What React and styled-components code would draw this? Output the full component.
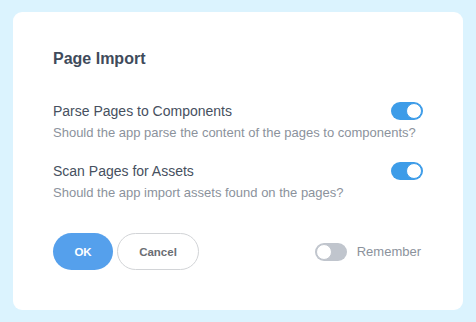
import React, { useState } from "react";
import styled, { createGlobalStyle } from "styled-components";

const GlobalStyle = createGlobalStyle`
  html, body {
    margin: 0;
    background: #dbf3fe;
  }
  body {
    padding: 12px 13px;
    font-family: "Liberation Sans", Arial, sans-serif;
  }
`;

const Card = styled.div`
  width: 450px;
  height: 298px;
  box-sizing: border-box;
  background: #ffffff;
  border-radius: 9px;
  padding: 37px 40px 0 40px;
  display: flex;
  flex-direction: column;
`;

const Title = styled.h2`
  margin: 0;
  font-size: 16px;
  font-weight: bold;
  color: #3f4b5b;
  line-height: 20px;
`;

const Options = styled.div`
  margin-top: 33px;
  display: flex;
  flex-direction: column;
  gap: 21px;
`;

const Option = styled.div`
  display: grid;
  grid-template-columns: 1fr auto;
  row-gap: 5px;
  align-items: center;
`;

const Label = styled.div`
  font-size: 14px;
  color: #465060;
  line-height: 18px;
`;

const Description = styled.div`
  grid-column: 1 / span 2;
  font-size: 13px;
  color: #8b929c;
  line-height: 16px;
`;

const Track = styled.button`
  position: relative;
  width: 32px;
  height: 18px;
  padding: 0;
  border: none;
  border-radius: 9px;
  cursor: pointer;
  background: ${(p) => (p.$on ? "#3d9ce8" : "#c0c5cd")};
`;

const Knob = styled.span`
  position: absolute;
  top: 1px;
  left: ${(p) => (p.$on ? "15px" : "1px")};
  width: 16px;
  height: 16px;
  box-sizing: border-box;
  border-radius: 50%;
  background: #ffffff;
  border: 1px solid ${(p) => (p.$on ? "#3d9ce8" : "#c0c5cd")};
`;

const Toggle = ({ on, onChange }) => (
  <Track $on={on} onClick={() => onChange(!on)}>
    <Knob $on={on} />
  </Track>
);

const Footer = styled.div`
  margin-top: 32px;
  display: flex;
  align-items: center;
`;

const Buttons = styled.div`
  display: flex;
  gap: 4px;
`;

const Button = styled.button`
  height: 37px;
  min-width: ${(p) => (p.$primary ? "60px" : "82px")};
  border-radius: 19px;
  font-family: inherit;
  font-size: 11.5px;
  font-weight: bold;
  cursor: pointer;
  box-sizing: border-box;
  background: ${(p) => (p.$primary ? "#55a0ec" : "#ffffff")};
  color: ${(p) => (p.$primary ? "#ffffff" : "#6b6e73")};
  border: ${(p) => (p.$primary ? "none" : "1px solid #d2d4d7")};
`;

const Remember = styled.label`
  margin-left: auto;
  margin-right: 2px;
  display: flex;
  align-items: center;
  gap: 10px;
  font-size: 13px;
  color: #8b929c;
`;

export default function App() {
  const [parse, setParse] = useState(true);
  const [scan, setScan] = useState(true);
  const [remember, setRemember] = useState(false);

  return (
    <>
      <GlobalStyle />
      <Card>
        <Title>Page Import</Title>
        <Options>
          <Option>
            <Label>Parse Pages to Components</Label>
            <Toggle on={parse} onChange={setParse} />
            <Description>
              Should the app parse the content of the pages to components?
            </Description>
          </Option>
          <Option>
            <Label>Scan Pages for Assets</Label>
            <Toggle on={scan} onChange={setScan} />
            <Description>
              Should the app import assets found on the pages?
            </Description>
          </Option>
        </Options>
        <Footer>
          <Buttons>
            <Button $primary>OK</Button>
            <Button>Cancel</Button>
          </Buttons>
          <Remember>
            <Toggle on={remember} onChange={setRemember} />
            Remember
          </Remember>
        </Footer>
      </Card>
    </>
  );
}
